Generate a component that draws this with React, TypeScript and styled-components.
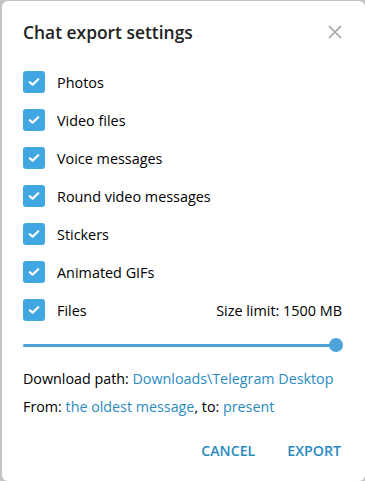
import React from 'react';
import styled, { createGlobalStyle } from 'styled-components';

const GlobalStyle = createGlobalStyle`
  * {
    box-sizing: border-box;
    margin: 0;
    padding: 0;
  }

  body {
    background: #c4c4c4;
    font-family: "Open Sans", "Noto Sans", sans-serif;
    overflow: hidden;
  }
`;

const Dialog = styled.div`
  margin: 1px 0 0 2px;
  width: 363px;
  height: 480px;
  background: #fff;
  border-radius: 6px;
  padding: 0 23px 0 21px;
  display: flex;
  flex-direction: column;
`;

const Header = styled.div`
  display: flex;
  align-items: center;
  justify-content: space-between;
  height: 62px;
`;

const Title = styled.h1`
  font-size: 17.4px;
  font-weight: 600;
  color: #222;
`;

const CloseButton = styled.button`
  width: 18px;
  height: 18px;
  margin-right: -2px;
  border: none;
  background: none;
  display: flex;
  align-items: center;
  justify-content: center;
  cursor: pointer;
`;

const Options = styled.div`
  display: flex;
  flex-direction: column;
`;

const Row = styled.label`
  display: flex;
  align-items: center;
  height: 38px;
  font-size: 14.4px;
  color: #000;
`;

const Box = styled.span`
  width: 22px;
  height: 22px;
  border-radius: 3px;
  background: #40a7e3;
  display: flex;
  align-items: center;
  justify-content: center;
  margin-right: 12px;
  flex-shrink: 0;
`;

const Label = styled.span`
  flex: 1;
`;

const Limit = styled.span`
  font-size: 14.4px;
`;

const Slider = styled.div`
  position: relative;
  height: 20px;
  margin: 6px 0 10px;
  display: flex;
  align-items: center;
`;

const Track = styled.div`
  height: 3px;
  flex: 1;
  background: #4ea4d9;
  border-radius: 2px;
`;

const Thumb = styled.div`
  position: absolute;
  right: -1px;
  top: 3px;
  width: 14px;
  height: 14px;
  border-radius: 50%;
  background: #4ea4d9;
`;

const Info = styled.p`
  font-size: 14.3px;
  color: #000;
  line-height: 28px;
`;

const Link = styled.a`
  color: #2a8bbf;
  text-decoration: none;
`;

const Footer = styled.div`
  display: flex;
  justify-content: flex-end;
  gap: 32px;
  margin-top: 20px;
  padding-right: 1px;
`;

const Action = styled.button`
  border: none;
  background: none;
  font-family: inherit;
  font-size: 14.2px;
  font-weight: 600;
  color: #2a8bbf;
  text-transform: uppercase;
  cursor: pointer;
`;

const Check = () => (
  <svg width="12" height="10" viewBox="0 0 12 10">
    <path d="M1.8 5.2 L4.6 7.8 L10.2 2.2" fill="none" stroke="#fff" strokeWidth="2.2" strokeLinecap="round" strokeLinejoin="round" />
  </svg>
);

const items = ['Photos', 'Video files', 'Voice messages', 'Round video messages', 'Stickers', 'Animated GIFs'];

export default function App() {
  return (
    <>
      <GlobalStyle />
      <Dialog>
        <Header>
          <Title>Chat export settings</Title>
          <CloseButton aria-label="close">
            <svg width="14" height="14" viewBox="0 0 14 14">
              <path d="M1 1 L13 13 M13 1 L1 13" stroke="#a3a3a3" strokeWidth="1.6" />
            </svg>
          </CloseButton>
        </Header>
        <Options>
          {items.map((item) => (
            <Row key={item}>
              <Box>
                <Check />
              </Box>
              <Label>{item}</Label>
            </Row>
          ))}
          <Row>
            <Box>
              <Check />
            </Box>
            <Label>Files</Label>
            <Limit>Size limit: 1500 MB</Limit>
          </Row>
        </Options>
        <Slider>
          <Track />
          <Thumb />
        </Slider>
        <Info>
          Download path: <Link>Downloads\Telegram Desktop</Link>
        </Info>
        <Info>
          From: <Link>the oldest message</Link>, to: <Link>present</Link>
        </Info>
        <Footer>
          <Action>Cancel</Action>
          <Action>Export</Action>
        </Footer>
      </Dialog>
    </>
  );
}
